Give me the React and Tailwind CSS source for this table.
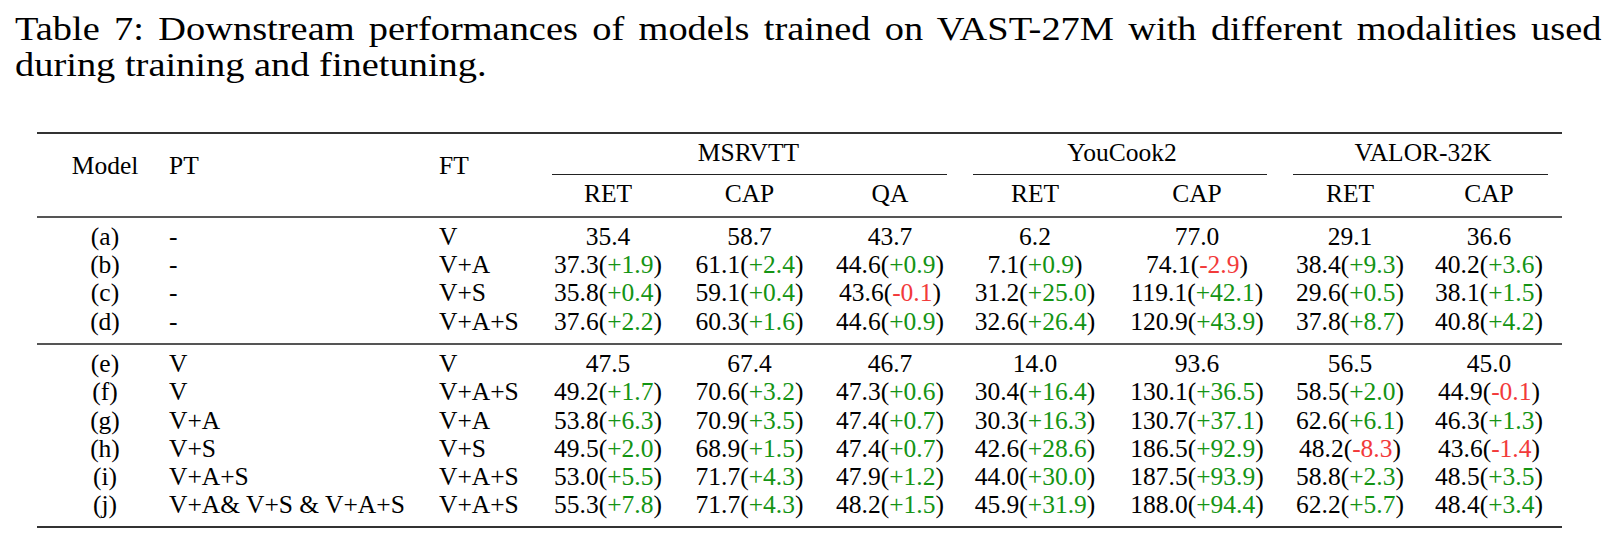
const rowsA = [
  ["(a)", "-", "V", "35.4", "58.7", "43.7", "6.2", "77.0", "29.1", "36.6"],
  ["(b)", "-", "V+A", "37.3(+1.9)", "61.1(+2.4)", "44.6(+0.9)", "7.1(+0.9)", "74.1(-2.9)", "38.4(+9.3)", "40.2(+3.6)"],
  ["(c)", "-", "V+S", "35.8(+0.4)", "59.1(+0.4)", "43.6(-0.1)", "31.2(+25.0)", "119.1(+42.1)", "29.6(+0.5)", "38.1(+1.5)"],
  ["(d)", "-", "V+A+S", "37.6(+2.2)", "60.3(+1.6)", "44.6(+0.9)", "32.6(+26.4)", "120.9(+43.9)", "37.8(+8.7)", "40.8(+4.2)"],
];

const rowsB = [
  ["(e)", "V", "V", "47.5", "67.4", "46.7", "14.0", "93.6", "56.5", "45.0"],
  ["(f)", "V", "V+A+S", "49.2(+1.7)", "70.6(+3.2)", "47.3(+0.6)", "30.4(+16.4)", "130.1(+36.5)", "58.5(+2.0)", "44.9(-0.1)"],
  ["(g)", "V+A", "V+A", "53.8(+6.3)", "70.9(+3.5)", "47.4(+0.7)", "30.3(+16.3)", "130.7(+37.1)", "62.6(+6.1)", "46.3(+1.3)"],
  ["(h)", "V+S", "V+S", "49.5(+2.0)", "68.9(+1.5)", "47.4(+0.7)", "42.6(+28.6)", "186.5(+92.9)", "48.2(-8.3)", "43.6(-1.4)"],
  ["(i)", "V+A+S", "V+A+S", "53.0(+5.5)", "71.7(+4.3)", "47.9(+1.2)", "44.0(+30.0)", "187.5(+93.9)", "58.8(+2.3)", "48.5(+3.5)"],
  ["(j)", "V+A& V+S & V+A+S", "V+A+S", "55.3(+7.8)", "71.7(+4.3)", "48.2(+1.5)", "45.9(+31.9)", "188.0(+94.4)", "62.2(+5.7)", "48.4(+3.4)"],
];

const cols = "grid grid-cols-[116px_270px_114px_142px_141px_140px_150px_174px_132px_146px]";

// "37.3(+1.9)" -> 37.3( green +1.9 )
const Score = ({ value }) => {
  const m = value.match(/^(.+)\(([+-][\d.]+)\)$/);
  if (!m) return <>{value}</>;
  const up = m[2].startsWith("+");
  return (
    <>
      {m[1]}(
      <span className={up ? "text-[#149414]" : "text-[#f23a3a]"}>{m[2]}</span>)
    </>
  );
};

const Row = ({ row }) => (
  <div className={`${cols} leading-[28.3px]`}>
    <div className="pl-[20px] text-center">{row[0]}</div>
    <div className="pl-[16px]">{row[1]}</div>
    <div className="pl-[16px]">{row[2]}</div>
    {row.slice(3).map((v, i) => (
      <div key={i} className="text-center whitespace-nowrap">
        <Score value={v} />
      </div>
    ))}
  </div>
);

const Group = ({ name, span, rule }) => (
  <div className={span}>
    <div className="pt-[5px] text-center leading-[28.3px]">{name}</div>
    <div className={`mt-[7px] h-px bg-[#222] ${rule}`} />
  </div>
);

export default function App() {
  return (
    <div className="w-[1615px] h-[547px] bg-white text-black font-['Liberation_Serif','Times_New_Roman',serif]">
      {/* Caption (the source type is set wide, so it is stretched a little) */}
      <div className="pt-[11px] pl-[15px]">
        <div className="w-[1404px] origin-left scale-x-[1.13] text-[34px] leading-[36px]">
          <div className="text-justify [text-align-last:justify]">
            Table 7: Downstream performances of models trained on VAST-27M with different modalities used
          </div>
          <div>during training and finetuning.</div>
        </div>
      </div>

      {/* Table */}
      <div className="mt-[49px] ml-[37px] w-[1525px] text-[25.5px]">
        <div className="h-[2px] bg-[#333]" />

        {/* Header */}
        <div className={cols}>
          <div className="row-span-2 pt-[18px] pl-[20px] text-center leading-[28.3px]">Model</div>
          <div className="row-span-2 pt-[18px] pl-[16px] leading-[28.3px]">PT</div>
          <div className="row-span-2 pt-[18px] pl-[16px] leading-[28.3px]">FT</div>
          <Group name="MSRVTT" span="col-span-3" rule="ml-[15px] mr-[13px]" />
          <Group name="YouCook2" span="col-span-2" rule="ml-[13px] mr-[17px]" />
          <Group name="VALOR-32K" span="col-span-2" rule="ml-[9px] mr-[14px]" />
          {["RET", "CAP", "QA", "RET", "CAP", "RET", "CAP"].map((h, i) => (
            <div key={i} className="pt-[4.7px] pb-[7.5px] text-center leading-[28.3px]">
              {h}
            </div>
          ))}
        </div>

        <div className="h-[2px] bg-[#555]" />
        <div className="pt-[5px] pb-[7px]">
          {rowsA.map((r) => (
            <Row key={r[0]} row={r} />
          ))}
        </div>

        <div className="h-[2px] bg-[#555]" />
        <div className="pt-[5px] pb-[6px]">
          {rowsB.map((r) => (
            <Row key={r[0]} row={r} />
          ))}
        </div>

        <div className="h-[2px] bg-[#333]" />
      </div>
    </div>
  );
}
